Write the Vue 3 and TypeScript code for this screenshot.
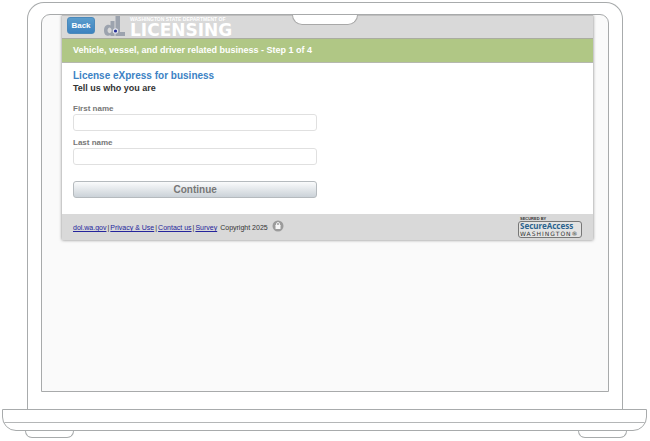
<script setup lang="ts">
import { ref } from 'vue'

interface FooterLink {
  label: string
  href: string
}

const firstName = ref<string>('')
const lastName = ref<string>('')

const links: FooterLink[] = [
  { label: 'dol.wa.gov', href: '#home' },
  { label: 'Privacy & Use', href: '#privacy' },
  { label: 'Contact us', href: '#contact' },
  { label: 'Survey', href: '#survey' },
]
</script>

<template>
  <div class="laptop">
    <div class="lid">
      <div class="screen">
        <div class="notch"></div>
        <main class="page">
          <header class="masthead">
            <button type="button" class="back">Back</button>
            <div class="brand">
              <svg class="mark" viewBox="0 0 21 20" aria-hidden="true">
                <path
                  fill="#9ca3ae"
                  fill-rule="evenodd"
                  d="M6.500 5h4v15h-4v-1C5 20.400 0 20.600 0 14.500S5 8.200 6.500 9.500zM5.500 11.500a2 2.900 0 1 0 .1 0z"
                />
                <path fill="#9ca3ae" d="M11.500 0h4.500v16h5v4h-9.500z" />
                <circle cx="11.500" cy="15" r="2.700" fill="#e4e6ec" />
                <circle cx="11.500" cy="15" r="1.600" fill="#25309a" />
              </svg>
              <div class="wordmark">
                <span class="agency">WASHINGTON STATE DEPARTMENT OF</span>
                <span class="dept">LICENSING</span>
              </div>
            </div>
          </header>

          <h1 class="step">Vehicle, vessel, and driver related business - Step 1 of 4</h1>

          <form class="form" @submit.prevent>
            <h2 class="title">License eXpress for business</h2>
            <p class="lead">Tell us who you are</p>
            <label class="label" for="first-name">First name</label>
            <input id="first-name" v-model="firstName" class="field" type="text" />
            <label class="label" for="last-name">Last name</label>
            <input id="last-name" v-model="lastName" class="field" type="text" />
            <button type="submit" class="continue">Continue</button>
          </form>

          <footer class="footer">
            <div class="legal">
              <nav class="links">
                <template v-for="(link, i) in links" :key="link.label">
                  <span v-if="i > 0">|</span>
                  <a :href="link.href">{{ link.label }}</a>
                </template>
              </nav>
              <span>Copyright 2025</span>
            </div>
            <svg class="lock" viewBox="0 0 12 12" aria-hidden="true">
              <circle cx="6" cy="6" r="5.500" fill="#9b9b9b" />
              <path d="M4.500 5.500V4a1.500 1.500 0 0 1 3 0v1.500" fill="none" stroke="#eee" />
              <rect x="3.500" y="4.700" width="5" height="4.300" rx=".5" fill="#f6f6f6" />
            </svg>
            <div class="secure">
              <span class="secured-by">SECURED BY</span>
              <div class="badge">
                <span class="access">SecureAccess</span>
                <span class="state">WASHINGTON®</span>
              </div>
            </div>
          </footer>
        </main>
      </div>
    </div>
    <div class="base">
      <div class="deck"></div>
    </div>
    <div class="feet">
      <span class="foot"></span>
      <span class="foot"></span>
    </div>
  </div>
</template>

<style>
body {
  background: #fff;
}
</style>

<style scoped>
* {
  box-sizing: border-box;
}

.laptop {
  padding: 2px 3px 0 2px;
  font-family: 'Liberation Sans', Arial, sans-serif;
  color: #333;
}

.lid {
  margin: 0 24px 0 25px;
  padding: 11px 13px 17px;
  border: 1px solid #a8abac;
  border-bottom: 0;
  border-radius: 17px 17px 0 0;
}

.screen {
  position: relative;
  min-height: 378px;
  padding: 0 15px 0 20px;
  overflow: hidden;
  background: #fafafa;
  border: 1px solid #a8aaab;
  border-radius: 9px 9px 0 0;
}

.notch {
  position: absolute;
  top: 0;
  left: 50%;
  width: 66px;
  height: 10px;
  margin-left: -33px;
  background: #fff;
  border: 1px solid #a8a8a8;
  border-top: 0;
  border-radius: 0 0 10px 10px;
}

.page {
  background: #fff;
  box-shadow: 0 0 3px rgba(0, 0, 0, 0.5);
}

.masthead {
  display: flex;
  align-items: flex-start;
  gap: 9px;
  height: 23px;
  padding: 0 5px;
  background: #d9d9d9;
  border-top: 1px solid #bebebe;
}

.back {
  width: 28px;
  height: 17px;
  margin-top: 1px;
  padding: 0;
  font: bold 8px/15px 'Liberation Sans', Arial, sans-serif;
  color: #fff;
  background: linear-gradient(#5b9dcc, #3c82c0);
  border: 1px solid #4b89bb;
  border-radius: 3px;
}

.brand {
  display: flex;
  gap: 5px;
}

.mark {
  width: 21px;
  height: 20px;
}

.wordmark {
  display: flex;
  flex-direction: column;
  color: #fff;
  white-space: nowrap;
}

.agency {
  font-size: 5px;
  font-weight: bold;
  line-height: 6px;
}

.dept {
  font: bold 17px/16px 'DejaVu Sans', sans-serif;
}

.step {
  margin: 0;
  padding: 0 11px;
  font-size: 9px;
  line-height: 23px;
  color: #fff;
  background: #b0c785;
  border-top: 1px solid #aaad9f;
  border-bottom: 1px solid #b5b8ae;
}

.form {
  display: flex;
  flex-direction: column;
  align-items: flex-start;
  padding: 6px 11px 16px;
}

.title {
  margin: 0;
  font-size: 10px;
  line-height: 13px;
  color: #3c82c4;
}

.lead {
  margin: 0 0 8px;
  font-size: 9px;
  font-weight: bold;
  line-height: 13px;
}

.label {
  font-size: 8px;
  font-weight: bold;
  line-height: 11px;
  color: #777;
}

.field {
  width: 48%;
  height: 17px;
  margin-bottom: 6px;
  padding: 0 4px;
  font: 8px 'Liberation Sans', Arial, sans-serif;
  background: #fff;
  border: 1px solid #e0e0e0;
  border-radius: 3px;
}

.continue {
  width: 48%;
  height: 17px;
  margin-top: 10px;
  padding: 0;
  font: bold 10px/15px 'Liberation Sans', Arial, sans-serif;
  color: #777;
  background: linear-gradient(#fafbfc, #cbd2d8);
  border: 1px solid #b5babe;
  border-radius: 3px;
}

.footer {
  display: flex;
  align-items: center;
  gap: 4px;
  height: 26px;
  padding: 0 11px;
  font-size: 7px;
  line-height: 9px;
  background: #d9d9d9;
}

.legal {
  display: flex;
  gap: 3px;
  padding-top: 1px;
}

.links {
  display: flex;
  gap: 1px;
}

.links a {
  color: #24249c;
}

.lock {
  width: 12px;
  height: 12px;
  margin-bottom: 2px;
}

.secure {
  display: flex;
  flex-direction: column;
  margin-left: auto;
}

.secured-by {
  padding-left: 2px;
  font-size: 4px;
  font-weight: bold;
  line-height: 5px;
}

.badge {
  display: flex;
  flex-direction: column;
  width: 64px;
  height: 17px;
  padding-left: 1px;
  white-space: nowrap;
  background: #e3e3e3;
  border: 1px solid #777;
  border-radius: 3px;
}

.access {
  font: bold 8px/8px 'Noto Sans', sans-serif;
  color: #2b638f;
}

.state {
  font: 6px/7px 'DejaVu Sans', sans-serif;
  letter-spacing: 1px;
}

.base {
  height: 22px;
  overflow: hidden;
  background: #fff;
  border: 1px solid #a8abac;
  border-radius: 0 0 14px 14px;
}

.deck {
  height: 13px;
  border-bottom: 1px solid #b4b6b7;
}

.feet {
  display: flex;
  justify-content: space-between;
  padding: 0 20px 0 23px;
}

.foot {
  width: 49px;
  height: 7px;
  border: 1px solid #a8abac;
  border-top: 0;
  border-radius: 0 0 8px 8px;
}
</style>
